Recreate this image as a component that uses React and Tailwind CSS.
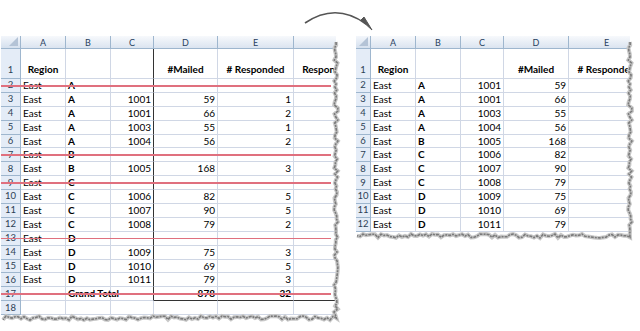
import React from 'react'

const leftRows = [
  { n: 2, c: ['East', 'A', '', '', ''], strike: true },
  { n: 3, c: ['East', 'A', '1001', '59', '1'] },
  { n: 4, c: ['East', 'A', '1001', '66', '2'] },
  { n: 5, c: ['East', 'A', '1003', '55', '1'] },
  { n: 6, c: ['East', 'A', '1004', '56', '2'] },
  { n: 7, c: ['East', 'B', '', '', ''], strike: true },
  { n: 8, c: ['East', 'B', '1005', '168', '3'] },
  { n: 9, c: ['East', 'C', '', '', ''], strike: true },
  { n: 10, c: ['East', 'C', '1006', '82', '5'] },
  { n: 11, c: ['East', 'C', '1007', '90', '5'] },
  { n: 12, c: ['East', 'C', '1008', '79', '2'] },
  { n: 13, c: ['East', 'D', '', '', ''], strike: true },
  { n: 14, c: ['East', 'D', '1009', '75', '3'] },
  { n: 15, c: ['East', 'D', '1010', '69', '5'] },
  { n: 16, c: ['East', 'D', '1011', '79', '3'] },
  { n: 17, c: ['', 'Grand Total', '', '878', '32'], strike: true, total: true },
  { n: 18, c: ['', '', '', '', ''] },
]

const rightRows = [
  ['East', 'A', '1001', '59'],
  ['East', 'A', '1001', '66'],
  ['East', 'A', '1003', '55'],
  ['East', 'A', '1004', '56'],
  ['East', 'B', '1005', '168'],
  ['East', 'C', '1006', '82'],
  ['East', 'C', '1007', '90'],
  ['East', 'C', '1008', '79'],
  ['East', 'D', '1009', '75'],
  ['East', 'D', '1010', '69'],
  ['East', 'D', '1011', '79'],
].map((c, i) => ({ n: i + 2, c: [...c, ''] }))

// torn paper edge: right side then bottom, deterministic wobble
function tornPath(w, h, top) {
  const pts = []
  let s = 7
  const rnd = () => {
    s = (s * 9301 + 49297) % 233280
    return s / 233280
  }
  for (let y = top; y <= h; y += 3) pts.push([w + rnd() * 4 - 2, y])
  for (let x = w; x >= 0; x -= 3) pts.push([x, h + rnd() * 4 - 2])
  return 'M' + pts.map(p => p[0].toFixed(1) + ' ' + p[1].toFixed(1)).join(' L')
}

function Corner() {
  return (
    <div className="relative h-[13px] border-r border-b border-[#9eb6ce] bg-gradient-to-b from-[#f3f6fb] to-[#d5e0ee]">
      <div className="absolute right-[2px] bottom-[2px] w-0 h-0 border-l-[9px] border-l-transparent border-b-[9px] border-b-[#b4c3d6]" />
    </div>
  )
}

function ColHead({ label }) {
  return (
    <div className="h-[13px] border-r border-b border-[#9eb6ce] bg-gradient-to-b from-[#f7f9fc] to-[#dbe4f0] text-center text-[9px] leading-[13px] text-[#27415f]">
      {label}
    </div>
  )
}

function RowNum({ n, tall }) {
  return (
    <div className={`${tall ? 'h-[30px] items-end pb-[1px]' : 'h-[13.9px] items-center'} flex justify-center border-r border-b border-[#9eb6ce] bg-[#e4ecf7] text-[9.5px] text-[#2c3f55]`}>
      {n}
    </div>
  )
}

function Cell({ v, align, bold, box, boxBottom, tall }) {
  return (
    <div
      className={`${tall ? 'h-[30px] items-end pb-[1px]' : 'h-[13.9px] items-center'} flex overflow-visible whitespace-nowrap px-[2px] border-b ${
        box ? 'border-r-[1.5px] border-r-[#333]' : 'border-r border-r-[#d0d7e5]'
      } ${boxBottom ? 'border-b-[#333]' : 'border-b-[#d0d7e5]'} ${
        align === 'r' ? 'justify-end' : align === 'c' ? 'justify-center' : 'justify-start'
      } ${bold ? 'font-bold' : ''} text-[10px] text-black`}
    >
      {v}
    </div>
  )
}

function Torn({ w, h }) {
  const d = tornPath(w, h, 6)
  return (
    <svg className="absolute left-0 top-0 pointer-events-none" width={w + 8} height={h + 8}>
      <path d={d} fill="none" stroke="#c8c8c8" strokeWidth="4" />
      <path d={d} fill="none" stroke="#7a7a7a" strokeWidth="1.6" strokeDasharray="3 1 2 1" />
    </svg>
  )
}

function LeftSheet() {
  const cols = 'grid grid-cols-[20px_45px_45px_43px_64px_76px_60px]'
  return (
    <div className="relative w-[343px] h-[290px]">
      <div className="w-[335px] h-[282px] overflow-hidden bg-white">
        <div className={cols}>
          <Corner />
          {['A', 'B', 'C', 'D', 'E', ''].map((l, i) => (
            <ColHead key={i} label={l} />
          ))}
        </div>
        <div className={cols}>
          <RowNum n={1} tall />
          <Cell v="Region" align="c" bold tall />
          <Cell v="" tall />
          <Cell v="" tall box />
          <Cell v="#Mailed" align="c" bold tall />
          <Cell v="# Responded" align="c" bold tall />
          <Cell v="Response" align="c" bold tall />
        </div>
        {leftRows.map(r => (
          <div key={r.n} className={`relative ${cols}`}>
            <RowNum n={r.n} />
            <Cell v={r.c[0]} />
            <Cell v={r.c[1]} bold />
            <Cell v={r.c[2]} align="r" box={r.n <= 17} />
            <Cell v={r.c[3]} align="r" bold={r.total} boxBottom={r.total} />
            <Cell v={r.c[4]} align="r" bold={r.total} boxBottom={r.total} />
            <Cell v="" boxBottom={r.total} />
            {r.strike && (
              <div className="absolute left-0 top-[6px] w-[330px] h-[1.5px] bg-[#e0707e]" />
            )}
          </div>
        ))}
      </div>
      <Torn w={335} h={282} />
    </div>
  )
}

function RightSheet() {
  const cols = 'grid grid-cols-[15px_45px_45px_43px_65px_76px]'
  return (
    <div className="relative w-[282px] h-[210px]">
      <div className="w-[274px] h-[200px] overflow-hidden bg-white">
        <div className={cols}>
          <Corner />
          {['A', 'B', 'C', 'D', 'E'].map((l, i) => (
            <ColHead key={i} label={l} />
          ))}
        </div>
        <div className={cols}>
          <RowNum n={1} tall />
          <Cell v="Region" align="c" bold tall />
          <Cell v="" tall />
          <Cell v="" tall />
          <Cell v="#Mailed" align="c" bold tall />
          <Cell v="# Responded" align="c" bold tall />
        </div>
        {rightRows.map(r => (
          <div key={r.n} className={cols}>
            <RowNum n={r.n} />
            <Cell v={r.c[0]} />
            <Cell v={r.c[1]} bold />
            <Cell v={r.c[2]} align="r" />
            <Cell v={r.c[3]} align="r" />
            <Cell v="" />
          </div>
        ))}
      </div>
      <Torn w={274} h={200} />
    </div>
  )
}

export default function App() {
  return (
    <div className="relative w-[640px] h-[331px] bg-white overflow-hidden font-[Lato,'Open_Sans',sans-serif]">
      <svg className="absolute left-0 top-0" width="640" height="40">
        <path d="M305 23 Q336 2 366 24" fill="none" stroke="#555" strokeWidth="1.6" />
        <path d="M361 20 L372 30 L364 17 Z" fill="#555" stroke="#555" strokeWidth="1" />
      </svg>
      <div className="flex items-start gap-[12px] pt-[36px] pl-[1px]">
        <LeftSheet />
        <RightSheet />
      </div>
    </div>
  )
}
